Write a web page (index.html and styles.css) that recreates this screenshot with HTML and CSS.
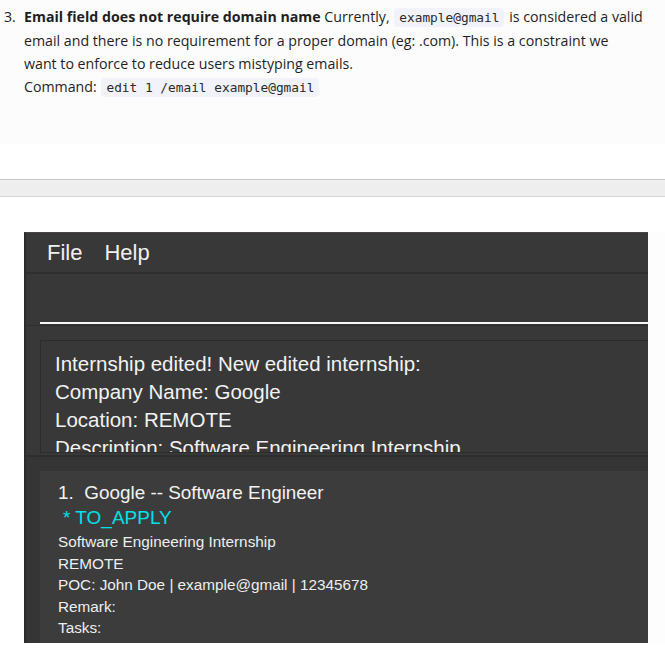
FILE: index.html
```html
<!DOCTYPE html>
<html>
<head>
<meta charset="utf-8">
<link rel="stylesheet" href="styles.css">
</head>
<body>
<section class="doc">
  <div class="item">
    <span class="num">3.</span>
    <p class="body"><strong>Email field does not require domain name</strong> Currently, <code>example@gmail</code> is considered a valid<br>email and there is no requirement for a proper domain (eg: .com). This is a constraint we<br>want to enforce to reduce users mistyping emails.<br>Command: <code>edit 1 /email example@gmail</code></p>
  </div>
</section>
<div class="gap"></div>
<div class="bar"></div>
<div class="gap2"></div>
<div class="stage">
<main class="app">
  <nav class="menubar"><span>File</span><span>Help</span></nav>
  <div class="command"><div class="input"></div></div>
  <div class="result">
    <div class="result-box">
      <p>Internship edited! New edited internship:</p>
      <p>Company Name: Google</p>
      <p>Location: REMOTE</p>
      <p>Description: Software Engineering Internship</p>
    </div>
  </div>
  <div class="list">
    <div class="card">
      <p class="title">1.&nbsp; Google -- Software Engineer</p>
      <p class="status">* TO_APPLY</p>
      <p class="line">Software Engineering Internship</p>
      <p class="line">REMOTE</p>
      <p class="line">POC: John Doe | example@gmail | 12345678</p>
      <p class="line">Remark:</p>
      <p class="line">Tasks:</p>
    </div>
  </div>
</main>
<div class="margin-right"></div>
</div>
</body>
</html>
```
FILE: styles.css
```css
* { box-sizing: border-box; }
html, body { margin: 0; padding: 0; background: #ffffff; }
body { width: 665px; height: 659px; overflow: hidden; }

.doc {
  background: #fcfcfc;
  height: 144px;
  padding-top: 5px;
  font-family: "Open Sans", "Noto Sans", sans-serif;
  font-size: 14.2px;
  color: #1f1f1f;
}
.item { display: flex; }
.num { width: 24px; padding-left: 4px; line-height: 23px; flex: none; }
.body { margin: 0; line-height: 23px; white-space: nowrap; }
.body strong { font-weight: 700; }
code {
  font-family: "DejaVu Sans Mono", monospace;
  font-size: 12.8px;
  background: #f2f2fa;
  border-radius: 4px;
  padding: 2px 5px;
  margin: 0 1px;
  color: #2a2a2a;
}

.gap { height: 35px; }
.bar {
  height: 18px;
  background: #eeeeee;
  border-top: 1px solid #c8c8c8;
  border-bottom: 1px solid #d8d8d8;
}
.gap2 { height: 35px; }

.stage {
  display: flex;
  padding-left: 24px;
  width: 665px;
  height: 427px;
  background: #ffffff;
}
.margin-right { flex: 1; height: 411px; background: #fdfdfd; }
.app {
  flex: none;
  width: 624px;
  height: 411px;
  overflow: hidden;
  background: #383838;
  border-left: 2px solid #2b2b2b;
  border-top: 1px solid #4a4444;
  font-family: "Liberation Sans", Arial, sans-serif;
  color: #f2f2f2;
  display: flex;
  flex-direction: column;
}
.menubar {
  height: 41px;
  flex: none;
  display: flex;
  align-items: center;
  gap: 22px;
  padding-left: 21px;
  font-size: 22px;
  border-bottom: 2px solid #2e2e2e;
  color: #f0f0f0;
}
.command {
  height: 52px;
  flex: none;
  padding-left: 14px;
  display: flex;
  align-items: flex-end;
  padding-bottom: 1px;
  border-bottom: 1px solid #2f2f2f;
}
.input { height: 2px; width: 100%; background: #f5f5f5; }
.result {
  height: 131px;
  flex: none;
  padding: 14px 0 2px 14px;
  border-bottom: 2px solid #2e2e2e;
}
.result-box {
  height: 100%;
  border: 1px solid #2c2c2c;
  border-right: none;
  padding: 9px 0 0 14px;
  overflow: hidden;
  font-size: 20.5px;
}
.result-box p { margin: 0; line-height: 28px; white-space: nowrap; }
.list {
  flex: 1;
  padding: 14px 0 0 14px;
  background: #353535;
}
.card {
  height: 100%;
  background: #3c3c3c;
  padding: 10px 0 0 18px;
}
.card p { margin: 0; white-space: nowrap; }
.title { font-size: 18.9px; line-height: 24px; }
.status { font-size: 19px; line-height: 26px; color: #00e0e8; padding-left: 5px; }
.line { font-size: 15.3px; line-height: 21.5px; color: #eeeeee; }
```
